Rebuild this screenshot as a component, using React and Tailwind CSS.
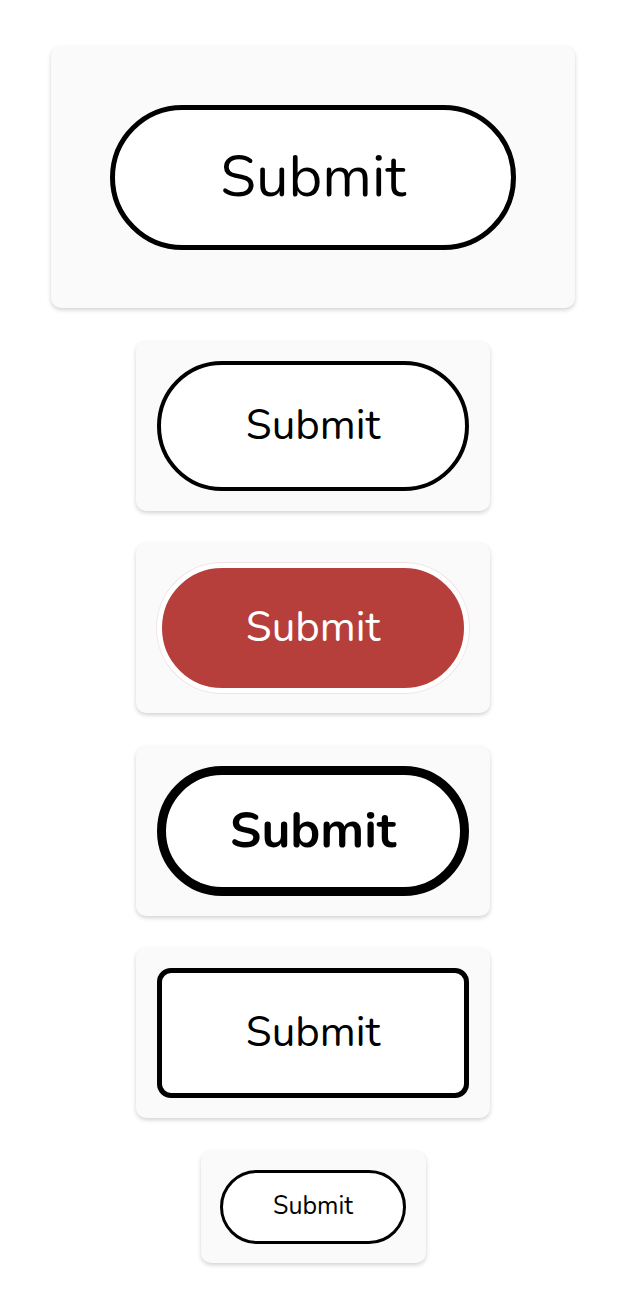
import React from 'react';

const font = { fontFamily: '"Nunito", "Lato", "Noto Sans", sans-serif' };

const Card = ({ className, children }) => (
  <div className={`bg-[#fafafa] rounded-[10px] shadow-[0_2px_4px_rgba(0,0,0,0.18)] flex items-center justify-center ${className}`}>
    {children}
  </div>
);

export default function App() {
  return (
    <div className="min-h-screen bg-white flex flex-col items-center gap-[32.6px] pt-[46px] pl-2 pb-12" style={font}>
      <Card className="w-[524px] h-[262px]">
        <button className="w-[406px] h-[145px] rounded-full border-[5px] border-black bg-white text-black text-[58px] leading-none flex items-center justify-center">
          Submit
        </button>
      </Card>

      <Card className="w-[354px] h-[170px]">
        <button className="w-[312px] h-[130px] rounded-full border-4 border-black bg-white text-black text-[42px] leading-none flex items-center justify-center">
          Submit
        </button>
      </Card>

      <Card className="w-[354px] h-[170px]">
        <button className="w-[312px] h-[130px] rounded-full border-[5px] border-white bg-[#b73f3b] text-white text-[42px] leading-none flex items-center justify-center shadow-[0_0_0_1px_#f3e3e3]">
          Submit
        </button>
      </Card>

      <Card className="w-[354px] h-[170px]">
        <button className="w-[312px] h-[130px] rounded-full border-[9px] border-black bg-white text-black text-[50px] font-bold leading-none flex items-center justify-center">
          Submit
        </button>
      </Card>

      <Card className="w-[354px] h-[170px]">
        <button className="w-[312px] h-[130px] rounded-[14px] border-[5px] border-black bg-white text-black text-[42px] leading-none flex items-center justify-center">
          Submit
        </button>
      </Card>

      <Card className="w-[225px] h-[112px]">
        <button className="w-[186px] h-[74px] rounded-full border-[3.5px] border-black bg-white text-black text-[25px] leading-none flex items-center justify-center">
          Submit
        </button>
      </Card>
    </div>
  );
}
